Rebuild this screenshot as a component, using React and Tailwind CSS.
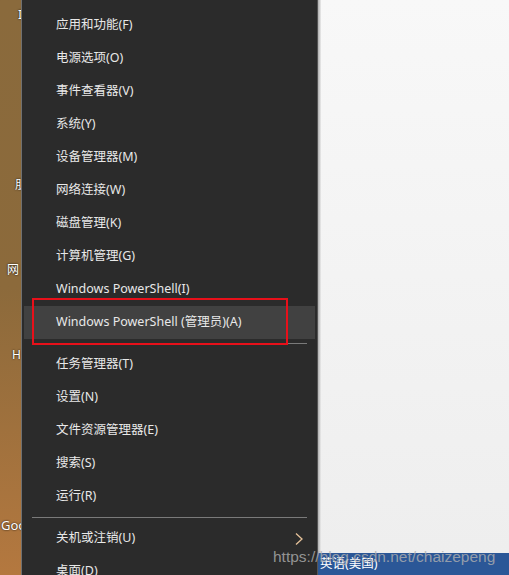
import React from "react";

const groupA = [
  "应用和功能(F)",
  "电源选项(O)",
  "事件查看器(V)",
  "系统(Y)",
  "设备管理器(M)",
  "网络连接(W)",
  "磁盘管理(K)",
  "计算机管理(G)",
  "Windows PowerShell(I)",
];
const groupB = ["任务管理器(T)", "设置(N)", "文件资源管理器(E)", "搜索(S)", "运行(R)"];

function Row({ label, active, arrow }) {
  return (
    <div
      className={`h-[33px] mx-[2px] flex items-center justify-between pl-[32px] pr-[10px] ${
        active ? "bg-[#414141]" : ""
      }`}
    >
      <span>{label}</span>
      {arrow && (
        <svg width="10" height="14" viewBox="0 0 10 14" className="mr-[1px]">
          <path d="M2 1.5 L8 7 L2 12.5" fill="none" stroke="#e6c29a" strokeWidth="1.3" />
        </svg>
      )}
    </div>
  );
}

function Divider() {
  return (
    <div className="h-[9px] flex items-center pl-[10px] pr-[10px]">
      <div className="h-px w-full bg-[#7a7a7a]" />
    </div>
  );
}

export default function App() {
  const font = { fontFamily: '"Noto Sans", "Noto Sans CJK SC", sans-serif' };
  return (
    <div className="relative w-[509px] h-[575px] overflow-hidden flex bg-[#f4f4f4]" style={font}>
      {/* desktop strip */}
      <div className="relative w-[21px] h-full shrink-0 bg-gradient-to-b from-[#8a6a3c] via-[#8c6a3b] to-[#b4783f] overflow-hidden text-white text-[12px] [text-shadow:0_0_2px_#000]">
        <span className="absolute left-[18px] top-[6px]">I</span>
        <span className="absolute left-[15px] top-[176px]">朋</span>
        <span className="absolute left-[7px] top-[261px]">网</span>
        <span className="absolute left-[12px] top-[346px]">H</span>
        <span className="absolute left-[1px] top-[516px] text-[13px]">Goo</span>
      </div>
      {/* menu */}
      <div className="w-[297px] h-full bg-[#2b2b2b] border-l border-[#707070] border-r border-r-[#555555] text-[#e8e8e8] text-[12.5px] pt-[9px] shrink-0">
        {groupA.map((l) => (
          <Row key={l} label={l} />
        ))}
        <Row label="Windows PowerShell (管理员)(A)" active />
        <Divider />
        {groupB.map((l) => (
          <Row key={l} label={l} />
        ))}
        <Divider />
        <Row label="关机或注销(U)" arrow />
        <Row label="桌面(D)" />
      </div>
      {/* right area */}
      <div className="flex-1 h-full flex flex-col">
        <div className="flex-1 flex">
          <div className="w-[3px] bg-gradient-to-r from-[#b0b0b0] to-[#ececec]" />
          <div className="flex-1 bg-gradient-to-b from-[#f8f8f8] to-[#eeeeee]" />
        </div>
        <div className="h-[22px] bg-[#2b5797] text-white text-[12.5px] pl-[2px] flex items-center">
          英语(美国)
        </div>
      </div>
      {/* red annotation box */}
      <div className="absolute left-[32px] top-[298px] w-[256px] h-[47px] border-2 border-[#e8101a]" />
      {/* watermark */}
      <div
        className="absolute left-[273px] top-[545px] text-[15.5px] text-[#b0b0b0]/80"
        style={{ fontFamily: '"Liberation Sans", sans-serif' }}
      >
        https://blog.csdn.net/chaizepeng
      </div>
    </div>
  );
}
